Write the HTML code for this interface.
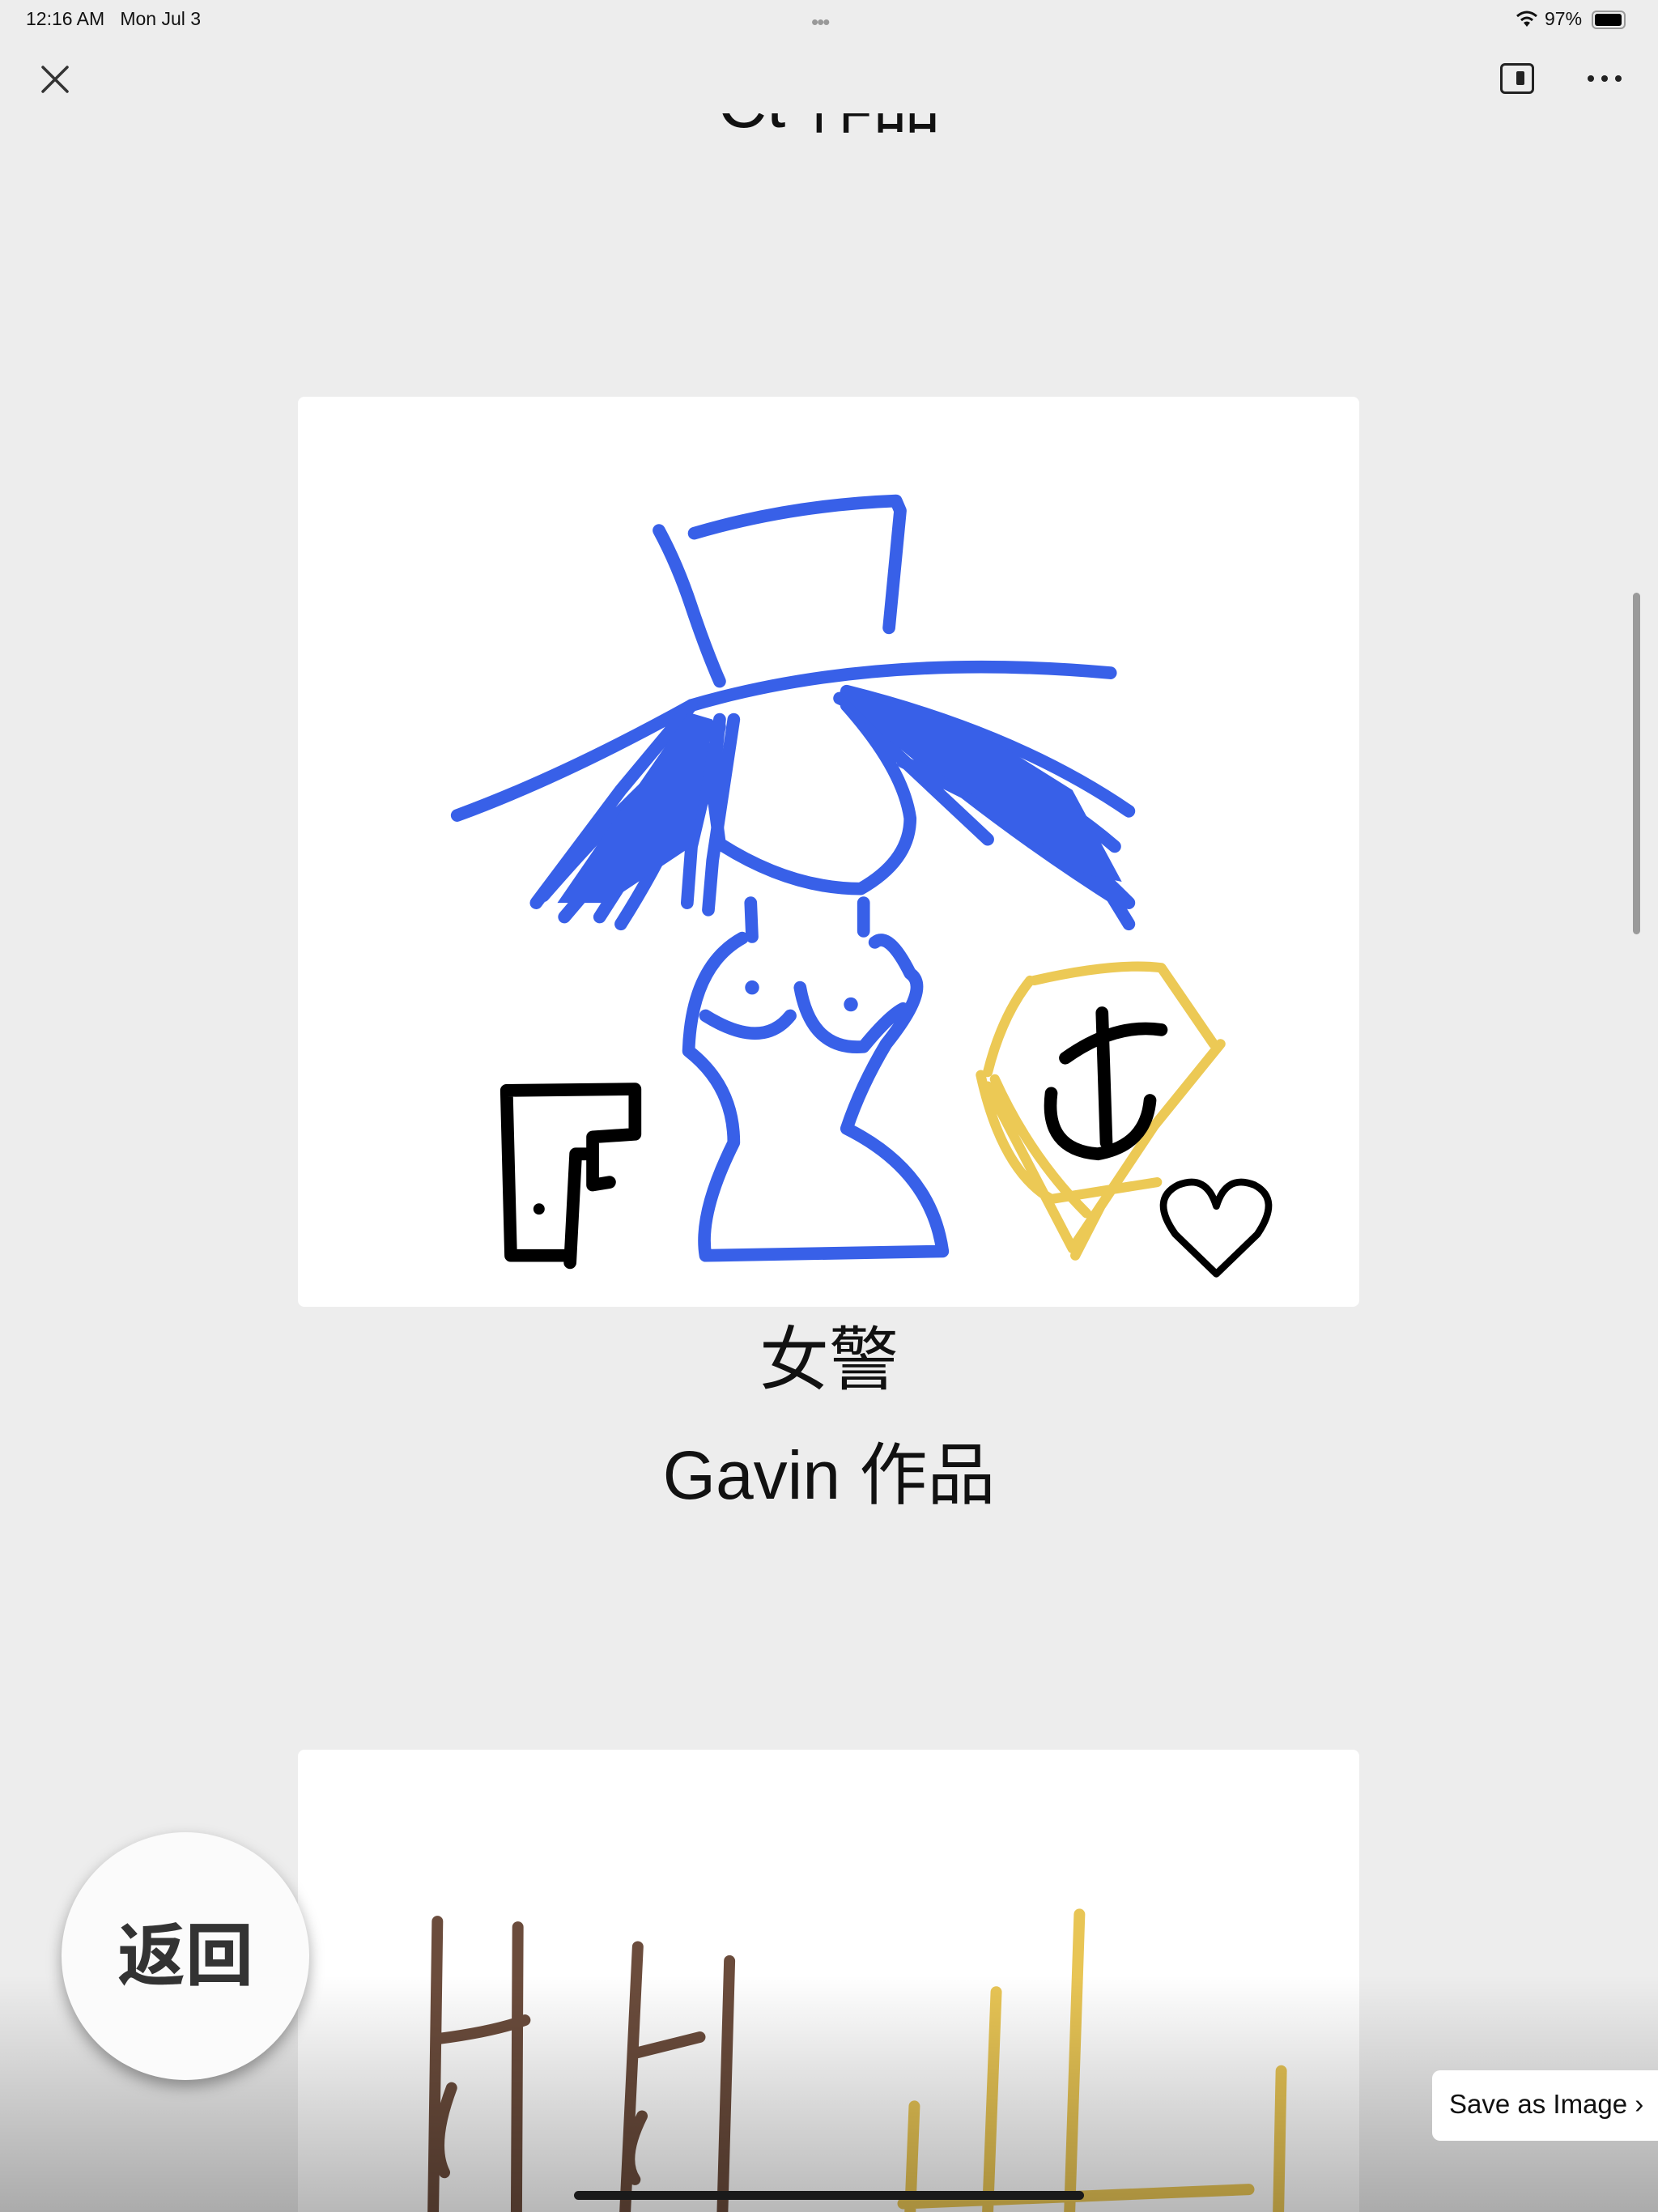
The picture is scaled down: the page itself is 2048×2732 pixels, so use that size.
<!DOCTYPE html>
<html style="width:2048px;height:2732px;overflow:hidden"><head><meta charset="utf-8"><style>
html,body{margin:0;padding:0}
body{width:2048px;height:2732px;background:#ededed;position:relative;overflow:hidden;font-family:"Liberation Sans","Noto Sans CJK SC",sans-serif}
.card{position:absolute;background:#fff;border-radius:8px}
.t{position:absolute;left:0;width:2048px;text-align:center;color:#111}
</style></head><body>
<div class="card" style="left:368px;top:490px;width:1311px;height:1124px"></div>
<div class="card" style="left:368px;top:2161px;width:1311px;height:571px;border-radius:8px 8px 0 0"></div>
<div style="position:absolute;left:0;top:140px;width:2048px;height:50px;overflow:hidden">
<div class="t" style="top:-62px;font-size:84px;line-height:100px">Ct 作品</div></div>
<div class="t" style="top:1630px;font-size:86px;line-height:100px">女警</div>
<div class="t" style="top:1772px;font-size:84px;line-height:100px">Gavin 作品</div>

<svg style="position:absolute;left:0;top:0" width="2048" height="2732" viewBox="0 0 1175 1568" preserveAspectRatio="none" fill="none" stroke-linecap="round" stroke-linejoin="round">
<g stroke="#3860e8" stroke-width="9">
<path d="M467 376 Q480 400 490 430 Q500 460 510 483"/>
<path d="M492 378 Q560 358 635 355 L638 362 L630 445"/>
<path d="M324 578 Q400 550 490 500 Q620 462 787 477"/>
<path d="M510 510 L505 560 L510 598 Q560 630 610 630 Q645 610 645 580 Q640 545 600 500"/>
<path d="M532 640 L533 664"/><path d="M612 640 L612 660"/>
<path d="M526 665 Q490 685 488 745 Q520 770 520 810 Q495 860 500 890 L668 887 Q660 830 600 800 Q610 770 628 740 Q660 700 645 690 Q630 660 620 668"/>
<path d="M500 720 Q540 745 560 720"/><path d="M567 700 Q575 745 612 742 Q630 720 640 715"/>
<path d="M500 520 Q450 560 385 635 M505 515 Q460 580 400 650 M500 530 Q470 580 425 650 M498 540 Q475 600 440 655 M510 515 L490 600 L487 640 M520 510 L505 610 L502 645 M490 500 L440 560 L380 640"/>
<path d="M595 495 Q700 540 800 640 M600 500 Q720 540 790 600 M600 490 Q720 520 800 575 M620 520 L700 595 M640 540 L720 580 M615 505 Q700 580 795 640 M610 505 L780 620 M760 590 L800 655"/>
</g>
<g fill="#3860e8"><path d="M488 505 L505 510 L490 600 L430 640 L395 640 Z"/><path d="M595 490 L680 510 L760 560 L795 625 L770 620 L700 570 L630 525 Z"/></g>
<g fill="#3860e8"><circle cx="533" cy="700" r="5"/><circle cx="603" cy="712" r="5"/></g>
<g stroke="#000" stroke-width="9">
<path d="M362 890 L359 773 L450 772 L450 804 L420 806 L420 840 L432 838 M420 818 L408 818 L404 895 M362 890 L404 890"/>
</g>
<circle cx="382" cy="857" r="4" fill="#000"/>
<g stroke="#ecc955" stroke-width="7">
<path d="M733 695 Q790 682 823 686 L860 740 M730 695 Q710 720 700 760 M695 762 Q710 830 745 850 L820 838 M700 770 L760 885 L818 798 L865 740 M762 890 L780 855 M705 765 Q730 820 770 860"/>
</g>
<g stroke="#000" stroke-width="9">
<path d="M781 718 L784 810 M755 750 Q790 725 823 730 M745 775 Q740 815 778 818 Q812 812 815 780"/>
</g>
<path d="M862 903 L833 875 Q815 850 835 840 Q855 832 862 855 Q869 832 889 840 Q908 850 891 875 Z" stroke="#000" stroke-width="5"/>
<g stroke="#6b4c3c" stroke-width="8">
<path d="M310 1362 L307 1568 M367 1366 L366 1568 M452 1380 L443 1568 M517 1390 L512 1568 M312 1445 Q350 1440 372 1432 M320 1480 Q305 1520 315 1540 M452 1455 L496 1444 M455 1500 Q440 1530 450 1545"/>
</g>
<g stroke="#e8c555" stroke-width="8">
<path d="M765 1357 L758 1568 M706 1412 L700 1568 M648 1493 L645 1568 M908 1468 L906 1568 M640 1562 L885 1552"/>
</g>
</svg>

<div style="position:absolute;left:0;top:2440px;width:2048px;height:292px;background:linear-gradient(rgba(0,0,0,0),rgba(0,0,0,0.28))"></div>

<div style="position:absolute;left:2017px;top:732px;width:9px;height:422px;border-radius:5px;background:#9a9a9a"></div>

<div style="position:absolute;left:32px;top:10px;font-size:23px;color:#111">12:16 AM&nbsp;&nbsp;&nbsp;Mon Jul 3</div>
<div style="position:absolute;left:1002px;top:12px;font-size:26px;color:#999;letter-spacing:-2px">•••</div>
<svg style="position:absolute;left:1872px;top:12px" width="28" height="22" viewBox="0 0 28 22"><path d="M2 8 Q14 -2 26 8" stroke="#111" stroke-width="3" fill="none"/><path d="M7 13 Q14 7 21 13" stroke="#111" stroke-width="3" fill="none"/><path d="M10 16 L14 21 L18 16 Q14 13 10 16Z" fill="#111"/></svg>
<div style="position:absolute;left:1908px;top:10px;font-size:23px;color:#111">97%</div>
<div style="position:absolute;left:1966px;top:13px;width:38px;height:19px;border:2px solid #999;border-radius:6px"><div style="margin:2px;width:33px;height:15px;background:#000;border-radius:3px"></div></div>

<svg style="position:absolute;left:50px;top:80px" width="36" height="36"><path d="M3 3 L33 33 M33 3 L3 33" stroke="#333" stroke-width="3.5" stroke-linecap="round"/></svg>
<div style="position:absolute;left:1853px;top:78px;width:42px;height:38px;border:3.5px solid #222;border-radius:6px;box-sizing:border-box"><div style="position:absolute;left:17px;top:7px;width:10px;height:17px;background:#222;border-radius:2px"></div></div>
<svg style="position:absolute;left:1960px;top:92px" width="44" height="10"><circle cx="5" cy="5" r="4" fill="#222"/><circle cx="22" cy="5" r="4" fill="#222"/><circle cx="39" cy="5" r="4" fill="#222"/></svg>

<div style="position:absolute;left:76px;top:2263px;width:306px;height:306px;border-radius:50%;background:#fbfbfb;box-shadow:0 8px 18px rgba(0,0,0,0.35)"></div>
<div style="position:absolute;left:76px;top:2366px;width:306px;text-align:center;font-size:84px;line-height:100px;color:#333;font-weight:bold">返回</div>

<div style="position:absolute;left:1769px;top:2557px;width:300px;height:87px;background:#fff;border-radius:10px"></div>
<div style="position:absolute;left:1790px;top:2580px;font-size:33px;color:#111;white-space:nowrap">Save as Image ›</div>

<div style="position:absolute;left:709px;top:2706px;width:630px;height:11px;border-radius:6px;background:#1a1a1a"></div>
</body></html>
